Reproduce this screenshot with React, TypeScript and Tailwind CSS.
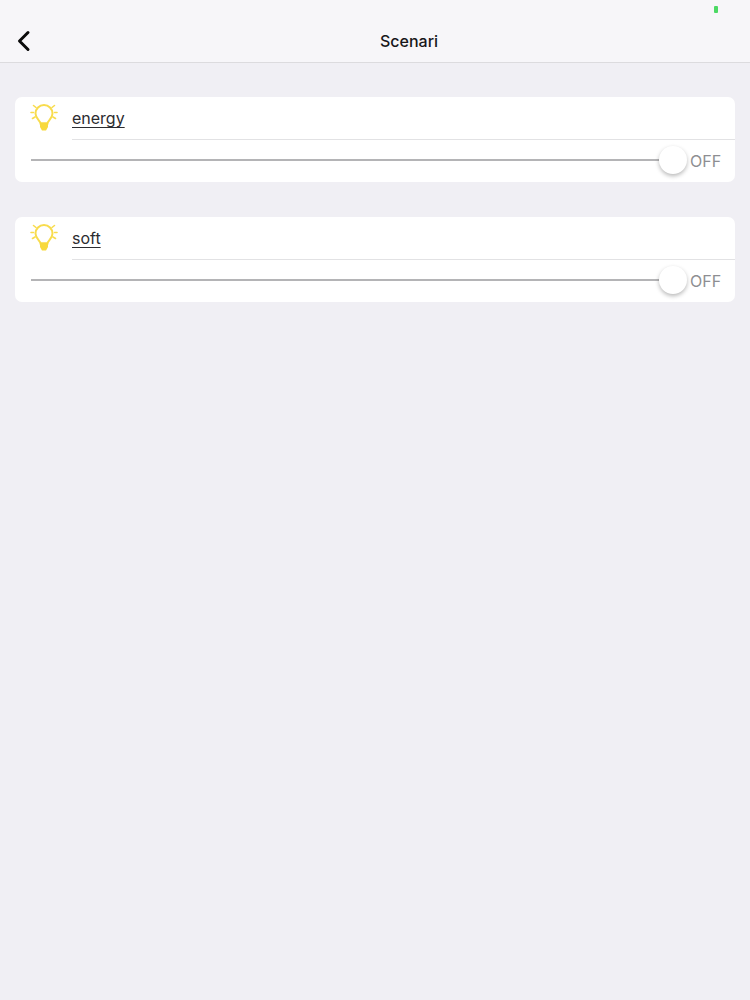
import React from 'react';

const BulbIcon: React.FC = () => (
    <svg width="28" height="30" viewBox="0 0 28 30" fill="none" stroke="#f8dc4e" strokeLinecap="round" className="shrink-0">
        <path d="M10.500 20.500c0-3-5-4.500-5-10a8.500 8.500 0 0 1 17 0c0 5.500-5 7-5 10z" strokeWidth="2" fill="#fff" />
        <path d="M10 19.500h8v4.500l-2 3.500h-4l-2-3.500z" fill="#f8d93c" stroke="none" />
        <path d="M3.500 2.500l2.500 2M24.500 2.500l-2.500 2M1 9.500h2.500M27 9.500h-2.500M2.500 15.500l2.500-1.500M25.500 15.500l-2.500-1.500" strokeWidth="1.600" />
    </svg>
);

const ScenarioCard: React.FC<{ name: string }> = ({ name }) => (
    <div className="h-[85px] rounded-[7px] bg-white flex flex-col">
        <div className="h-[42px] flex items-center pl-[15px]">
            <div className="w-[42px] -mt-[1px]">
                <BulbIcon />
            </div>
            <span className="text-[16px] leading-none text-[#2c2c30] underline underline-offset-[3px]">{name}</span>
        </div>
        <div className="ml-[57px] h-px bg-[#e2e2e4]" />
        <div className="flex-1 flex items-start pt-[19px] pl-[16px] pr-[15px]">
            <div className="flex-1 relative h-[2px] bg-[#b4b4b6]">
                <div className="absolute right-[-13px] top-[-13px] w-[28px] h-[28px] rounded-full bg-white shadow-[0_2px_4px_rgba(0,0,0,0.28)]" />
            </div>
            <span className="ml-[16px] w-[30px] text-[16px] leading-none text-[#8e8e92] -mt-[6px]">OFF</span>
        </div>
    </div>
);

const App: React.FC = () => {
    return (
        <div className="w-[750px] h-[1000px] bg-[#f0eff4] font-['Inter','Liberation_Sans',sans-serif] overflow-hidden">
            <header className="h-[63px] bg-[#f7f6f9] border-b border-[#dcdbde] relative flex items-end">
                <div className="absolute left-[714px] top-[6px] w-[4px] h-[7px] bg-[#4cd964] rounded-[1px]" />
                <div className="w-full h-[44px] flex items-center px-[16px] mb-[-1px]">
                    <svg width="16" height="22" viewBox="0 0 16 22" fill="none" stroke="#0b0b0b" strokeWidth="3" strokeLinecap="round" strokeLinejoin="round">
                        <path d="M12 2.500L3.500 11l8.500 8.500" />
                    </svg>
                    <h1 className="ml-[348px] text-[16px] font-medium text-[#17171a]">Scenari</h1>
                </div>
            </header>
            <main className="px-[15px] pt-[34px] flex flex-col gap-[35px]">
                <ScenarioCard name="energy" />
                <ScenarioCard name="soft" />
            </main>
        </div>
    );
};

export default App;
